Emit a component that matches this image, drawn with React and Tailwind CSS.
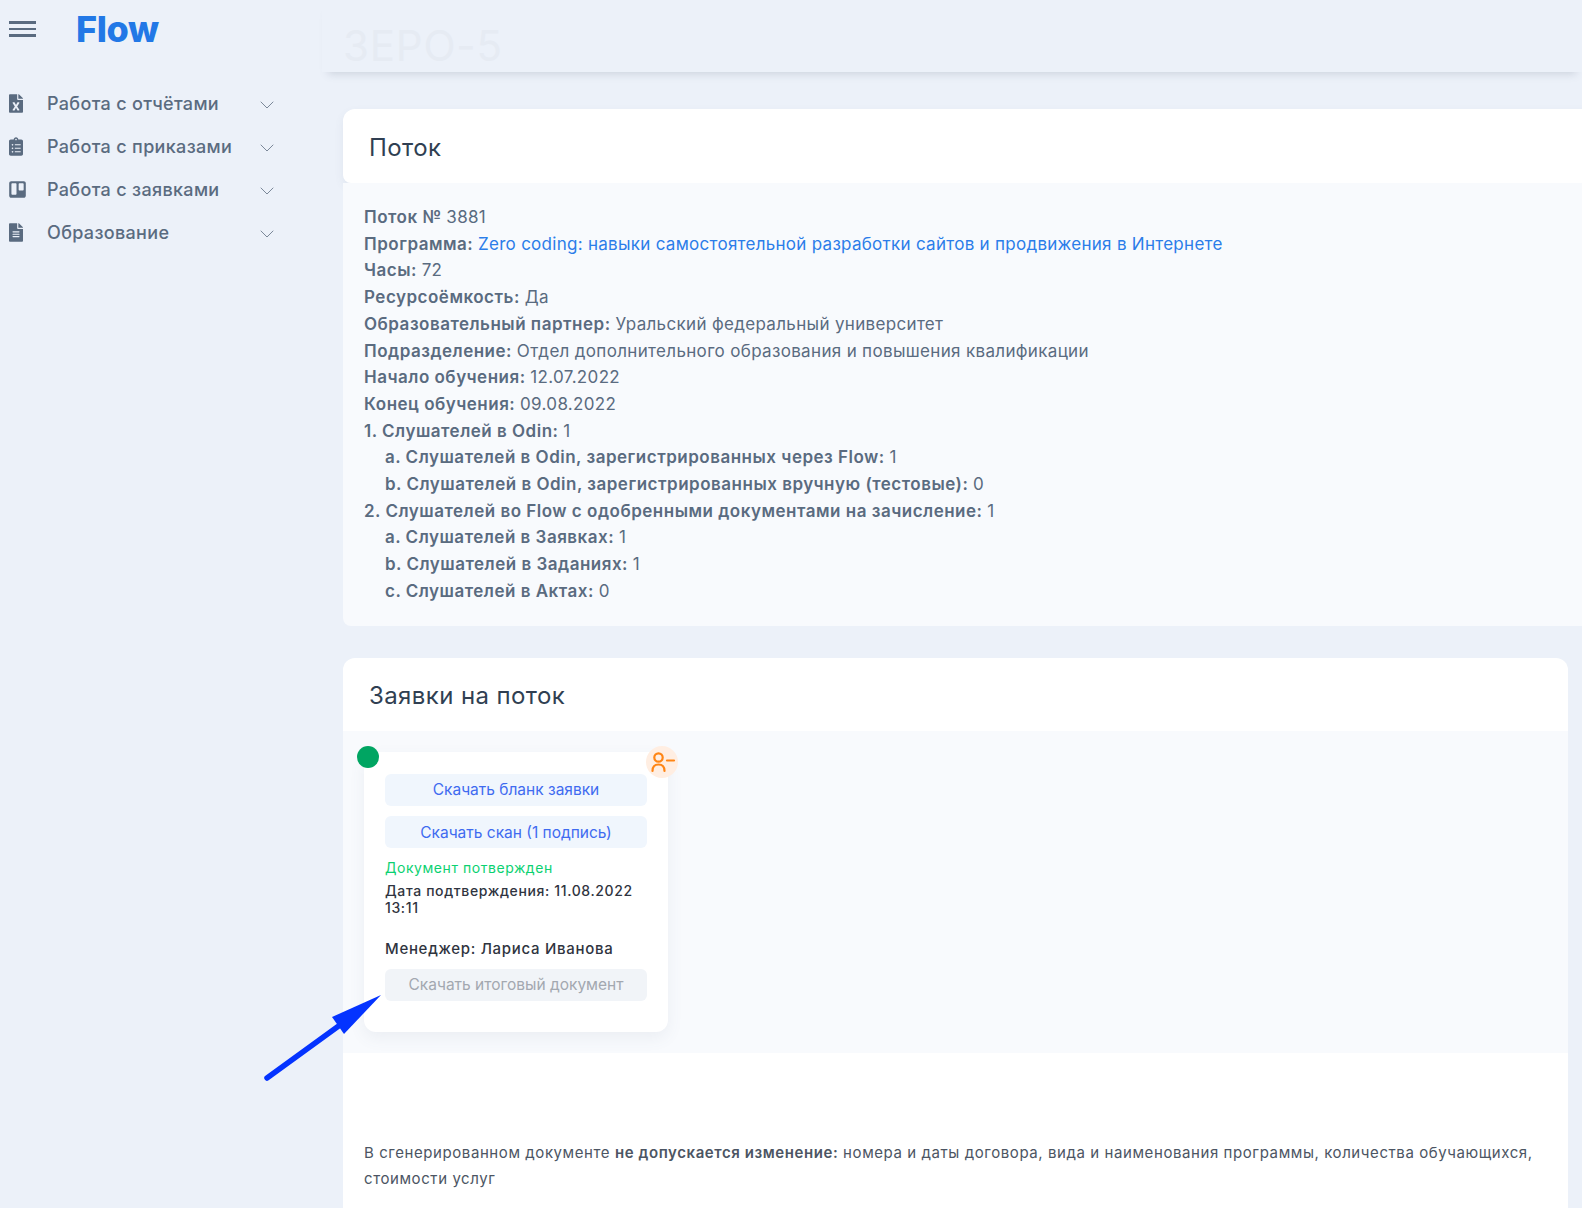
import { ChevronDown } from "lucide-react";
import { FaFileExcel, FaClipboardList, FaTrello, FaFileAlt } from "react-icons/fa";

const menu = [
    { label: "Работа с отчётами", Icon: FaFileExcel, size: "w-[14px] h-[19px]" },
    { label: "Работа с приказами", Icon: FaClipboardList, size: "w-[14px] h-[19px]" },
    { label: "Работа с заявками", Icon: FaTrello, size: "w-[17px] h-[19px]" },
    { label: "Образование", Icon: FaFileAlt, size: "w-[14px] h-[19px]" },
];

function Row({ label, value, indent, link }) {
    return (
        <div className={indent ? "pl-[21px]" : ""}>
            <span className="font-semibold tracking-[0.5px]">{label}</span>{" "}
            <span className={link ? "tracking-[0.28px] text-[#2b7de9]" : "font-normal tracking-[0.33px]"}>{value}</span>
        </div>
    );
}

export default function App() {
    return (
        <div className="relative flex h-[1208px] overflow-hidden bg-[#ecf1f9] font-['Inter',sans-serif]">
            {/* Sidebar */}
            <aside className="w-[322px] shrink-0 text-[#5a6b80]">
                <div className="flex h-[58px] items-center pl-[9px]">
                    <div className="flex w-[27px] flex-col gap-[4px]">
                        <span className="h-[2.5px] bg-[#5a6b80]" />
                        <span className="h-[2.5px] bg-[#5a6b80]" />
                        <span className="h-[2.5px] bg-[#5a6b80]" />
                    </div>
                    <span className="ml-[40px] text-[36px] font-extrabold tracking-[-0.4px] text-[#2278e6]">Flow</span>
                </div>
                <nav className="mt-[24px]">
                    {menu.map(({ label, Icon, size }) => (
                        <div key={label} className="flex h-[43px] items-center pl-[9px]">
                            <span className="flex w-[38px] shrink-0">
                                <Icon className={size} />
                            </span>
                            <span className="w-[208px] text-[18px] font-medium tracking-[0.33px]">{label}</span>
                            <ChevronDown className="mt-[2px] h-[24px] w-[24px] text-[#7b8899]" strokeWidth={1} />
                        </div>
                    ))}
                </nav>
            </aside>

            <main className="min-w-0 flex-1">
                <header className="h-[72px] pl-[21px] pt-[18px] shadow-[0_8px_8px_-6px_rgba(90,107,128,0.22)]">
                    <h1 className="text-[42px] leading-[56px] font-normal tracking-[0.8px] text-[#e6ebf3]">ЗЕРО-5</h1>
                </header>

                <section className="ml-[21px] mr-[-40px] mt-[37px]">
                    <div className="flex h-[74px] items-center rounded-t-xl rounded-b-lg bg-white pl-[26px] pt-[3px] text-[24px] font-normal tracking-[0.4px] text-[#303f52] shadow-[0_4px_10px_rgba(90,107,128,0.08)]">
                        Поток
                    </div>
                    <div className="h-[443px] rounded-b-lg bg-[#f8fafd] pl-[21px] pt-[21px] text-[17px] leading-[26.7px] text-[#5a6b80]">
                        <Row label="Поток №" value="3881" />
                        <Row label="Программа:" value="Zero coding: навыки самостоятельной разработки сайтов и продвижения в Интернете" link />
                        <Row label="Часы:" value="72" />
                        <Row label="Ресурсоёмкость:" value="Да" />
                        <Row label="Образовательный партнер:" value="Уральский федеральный университет" />
                        <Row label="Подразделение:" value="Отдел дополнительного образования и повышения квалификации" />
                        <Row label="Начало обучения:" value="12.07.2022" />
                        <Row label="Конец обучения:" value="09.08.2022" />
                        <Row label="1. Слушателей в Odin:" value="1" />
                        <Row indent label="a. Слушателей в Odin, зарегистрированных через Flow:" value="1" />
                        <Row indent label="b. Слушателей в Odin, зарегистрированных вручную (тестовые):" value="0" />
                        <Row label="2. Слушателей во Flow с одобренными документами на зачисление:" value="1" />
                        <Row indent label="a. Слушателей в Заявках:" value="1" />
                        <Row indent label="b. Слушателей в Заданиях:" value="1" />
                        <Row indent label="c. Слушателей в Актах:" value="0" />
                    </div>
                </section>

                <section className="ml-[21px] mr-[14px] mt-[32px] h-[560px] rounded-t-xl bg-white">
                    <div className="flex h-[73px] items-center pl-[26px] pt-[2px] text-[24px] font-normal tracking-[0.4px] text-[#303f52]">
                        Заявки на поток
                    </div>
                    <div className="h-[322px] bg-[#f8fafd] pl-[21px] pt-[21px]">
                        <div className="relative h-[280px] w-[304px] rounded-xl bg-white px-[21px] pt-[22px] shadow-[0_6px_16px_rgba(90,107,128,0.08)]">
                            <span className="absolute -left-[7px] -top-[6px] h-[22px] w-[22px] rounded-full bg-[#00a562]" />
                            <span className="absolute -right-[10px] -top-[6px] h-[32px] w-[32px] rounded-full bg-[#ffeee2]">
                                <svg viewBox="0 0 32 32" className="h-[32px] w-[32px]" fill="none" stroke="#ff8514" strokeWidth="2.2" strokeLinecap="round">
                                    <circle cx="12.5" cy="11.5" r="4.2" />
                                    <path d="M6.5 25 C6.5 20.5 9 18.5 12.5 18.5 C16 18.5 18.5 20.5 18.5 25" />
                                    <path d="M21 14.5 H28" />
                                </svg>
                            </span>
                            <div className="flex h-[32px] items-center justify-center rounded-md bg-[#f0f6fd] text-[15.5px] text-[#3f6bf0]">
                                Скачать бланк заявки
                            </div>
                            <div className="mt-[10px] flex h-[32px] items-center justify-center rounded-md bg-[#f0f6fd] pt-[1px] text-[15.5px] text-[#3f6bf0]">
                                Скачать скан (1 подпись)
                            </div>
                            <p className="mt-[11px] text-[14px] leading-[18px] tracking-[0.55px] text-[#0bd171]">Документ потвержден</p>
                            <p className="mt-[5px] text-[14px] leading-[17px] font-medium tracking-[0.63px] text-[#2f3440]">
                                Дата подтверждения: 11.08.2022 13:11
                            </p>
                            <p className="mt-[24px] text-[15px] leading-[18px] font-medium tracking-[0.7px] text-[#2f3440]">Менеджер: Лариса Иванова</p>
                            <div className="mt-[11px] flex h-[32px] items-center justify-center rounded-md bg-[#f1f4f8] text-[15.5px] text-[#a3a8b0]">
                                Скачать итоговый документ
                            </div>
                        </div>
                    </div>
                    <p className="mt-[87px] px-[21px] text-[15px] leading-[26px] tracking-[0.58px] text-[#4c5563]">
                        В сгенерированном документе <span className="font-semibold">не допускается изменение:</span> номера и даты договора, вида и наименования программы, количества обучающихся, стоимости услуг
                    </p>
                </section>
            </main>

            {/* Annotation arrow */}
            <svg className="absolute left-[260px] top-[990px] h-[95px] w-[125px]" viewBox="0 0 125 95">
                <path d="M7 88 L80 35" stroke="#0433ff" strokeWidth="5.5" strokeLinecap="round" fill="none" />
                <path d="M121 5 L72 27 L84 44 Z" fill="#0433ff" />
            </svg>
        </div>
    );
}
